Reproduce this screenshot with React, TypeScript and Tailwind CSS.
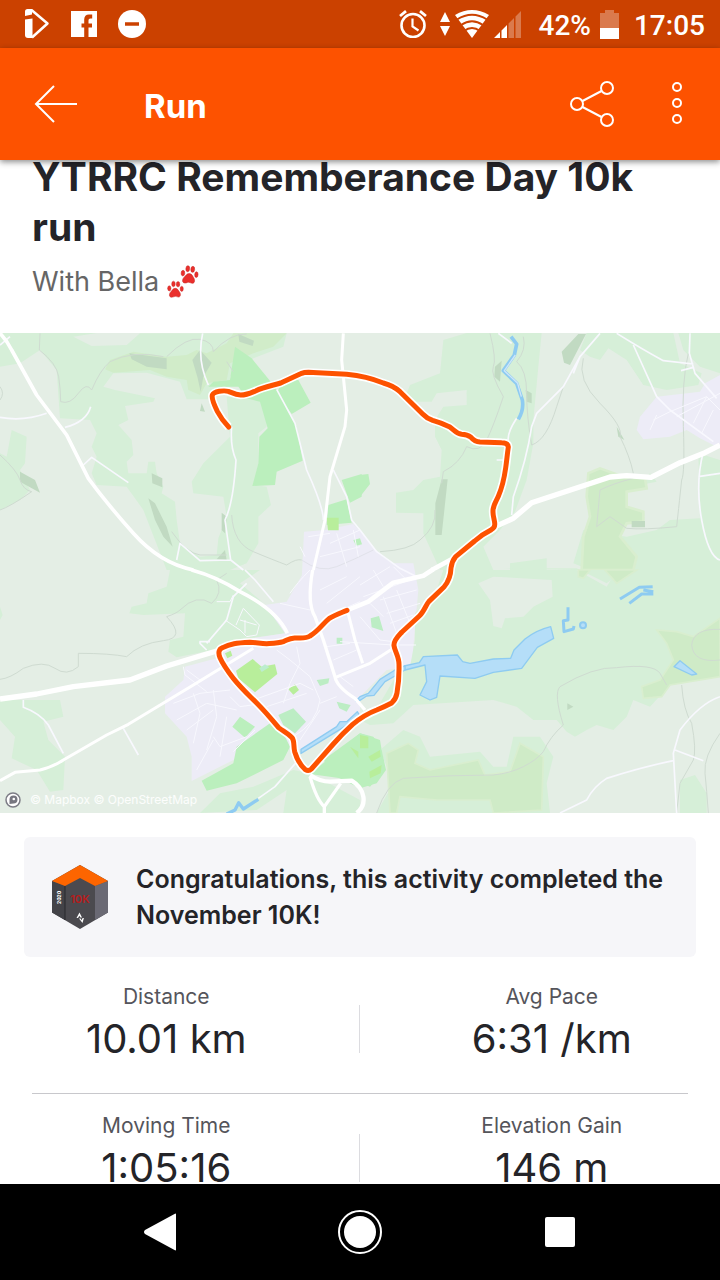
import type { ReactNode } from 'react';

interface Stat {
  label: string;
  value: string;
}

const statRows: Stat[][] = [
  [
    { label: 'Distance', value: '10.01 km' },
    { label: 'Avg Pace', value: '6:31 /km' },
  ],
  [
    { label: 'Moving Time', value: '1:05:16' },
    { label: 'Elevation Gain', value: '146 m' },
  ],
];

const route =
  'M686 282 C672 268 660 250 652 235 C642 215 634 198 637 186 C642 174 672 172 685 175 C698 180 706 185 722 186 C742 186 752 180 768 173 C790 162 815 158 842 150 L905 121 Q912 118 925 118 L1040 124 Q1100 130 1150 150 Q1180 158 1200 176 L1268 243 Q1280 256 1298 262 Q1320 268 1348 281 C1362 290 1368 302 1385 304 Q1402 305 1413 313 Q1424 326 1440 327 L1505 329 Q1524 329 1525 342 C1522 362 1520 385 1517 405 Q1510 455 1495 490 C1486 510 1478 520 1479 535 C1478 550 1486 566 1484 576 Q1484 584 1474 590 Q1446 604 1424 624 L1367 671 Q1356 684 1353 705 Q1352 738 1332 762 L1287 805 C1278 815 1272 836 1258 849 L1206 897 C1196 908 1180 922 1182 938 C1184 954 1198 972 1197 996 Q1198 1040 1191 1080 Q1188 1098 1175 1110 Q1152 1122 1130 1131 C1106 1140 1080 1156 1058 1174 C1038 1192 1020 1210 1000 1233 L934 1308 Q926 1316 916 1310 C900 1296 890 1276 884 1256 C880 1240 884 1224 876 1214 C864 1200 848 1194 836 1184 C806 1148 796 1136 770 1110 C740 1080 724 1066 700 1036 C680 1010 668 992 660 974 C654 960 656 948 668 944 C690 932 710 930 750 928 C770 928 780 932 800 932 C820 931 835 931 850 926 C864 920 868 916 884 915 C905 914 918 917 930 909 C958 892 968 872 988 856 C1004 846 1022 840 1041 832';

function StatusBar() {
  return (
    <div className="flex h-12 shrink-0 items-center justify-between bg-[#cb4100] pr-[15px] pl-6 text-white">
      <div className="flex items-center gap-[21px]">
        <svg viewBox="0 0 26 32" className="h-8 w-[26px]" fill="none">
          <path d="M1 3.500Q1 1 3.500 1H8v5.500L1 8z" fill="currentColor" />
          <path d="M1 11.500l7.500-1V30H4Q1 30 1 27z" fill="currentColor" />
          <path d="M7.500 2l16 13.500L8 29.500" stroke="currentColor" strokeWidth="2.500" strokeLinejoin="round" />
        </svg>
        <svg viewBox="0 0 26 26" className="size-[26px]">
          <path
            fill="currentColor"
            d="M0 0h26v26h-8.500V16.500h3.500v-4h-3.500V9.500c0-1.200.6-2 2-2h1.700v-4H18c-3 0-4.800 1.900-4.800 5v4h-2.700v4h2.700V26H0z"
          />
        </svg>
        <svg viewBox="0 0 28 28" className="size-7">
          <circle cx="14" cy="14" r="14" fill="currentColor" />
          <path d="M7 14h14" stroke="#cb4100" strokeWidth="3.500" />
        </svg>
      </div>
      <div className="flex items-center font-[Roboto,sans-serif] text-[28px] leading-8 font-medium">
        <svg viewBox="0 0 28 28" className="mr-3 size-7" fill="none" stroke="currentColor">
          <circle cx="14" cy="15.500" r="11.500" strokeWidth="2.600" />
          <path d="M13.500 8.500v8l6 4" strokeWidth="2.200" />
          <path d="M1 6l6-4.800M27 6l-6-4.800" strokeWidth="2.800" />
        </svg>
        <svg viewBox="0 0 12 24" className="mr-1 h-6 w-3" fill="currentColor">
          <path d="M1 10l5-10 5 10zM1 14h10L6 24z" />
        </svg>
        <svg viewBox="0 0 34 28" className="mr-[5px] h-7 w-[34px]">
          <path d="M0 5Q17-5 34 5L17 28z" fill="currentColor" />
          <path
            d="M2 9.500Q17 0 32 9.500M6 15Q17 7.500 28 15M9 21Q17 15 25 21"
            fill="none"
            stroke="#cb4100"
            strokeWidth="2"
          />
        </svg>
        <svg viewBox="0 0 28 28" className="mr-[17px] size-7" fill="currentColor">
          <path d="M0 28L6 22v6zM7.500 20.500L13 15v13H7.500z" />
          <path opacity=".3" d="M14.500 13.500L20 8v20h-5.500zM21.500 6.500L27 1v27h-5.500z" />
        </svg>
        <span className="pt-1">42%</span>
        <svg viewBox="0 0 19 29" className="mr-[15px] ml-[9px] h-[29px] w-[19px]" fill="currentColor">
          <path opacity=".3" d="M0 3h5V0h9v3h5v15H0z" />
          <path d="M0 18h19v11H0z" />
        </svg>
        <span className="pt-1">17:05</span>
      </div>
    </div>
  );
}

function AppBar() {
  return (
    <header className="z-10 flex h-28 shrink-0 items-center bg-[#fd5200] pr-[31px] pl-8 text-white shadow-[0_2px_6px_rgba(0,0,0,0.45)]">
      <button type="button" aria-label="Back" className="flex h-12 w-12 items-center justify-center">
        <svg viewBox="0 0 44 38" className="h-[38px] w-11" fill="none" stroke="currentColor" strokeWidth="2">
          <path d="M20 1L2 19l18 18M2 19h41" />
        </svg>
      </button>
      <h1 className="ml-16 flex-1 pt-1 text-[33px] leading-10 font-bold">Run</h1>
      <button type="button" aria-label="Share" className="flex h-12 w-12 items-center justify-center">
        <svg viewBox="0 0 44 46" className="h-[46px] w-11" fill="none" stroke="currentColor" strokeWidth="2">
          <circle cx="7" cy="23" r="6" />
          <circle cx="37" cy="7" r="6" />
          <circle cx="37" cy="39" r="6" />
          <path d="M12.500 20L31.500 10M12.500 26L31.500 36" />
        </svg>
      </button>
      <button type="button" aria-label="More options" className="ml-[49px] flex h-12 w-6 items-center justify-center">
        <svg viewBox="0 0 12 44" className="h-11 w-3" fill="none" stroke="currentColor" strokeWidth="2">
          <circle cx="6" cy="5" r="4" />
          <circle cx="6" cy="21" r="4" />
          <circle cx="6" cy="37" r="4" />
        </svg>
      </button>
    </header>
  );
}

function Paw({ transform }: { transform: string }) {
  return (
    <g transform={transform}>
      <ellipse cx="2.500" cy="8" rx="1.800" ry="2.800" />
      <ellipse cx="7" cy="3.200" rx="1.900" ry="3" />
      <ellipse cx="12" cy="3.500" rx="1.900" ry="3" />
      <ellipse cx="16" cy="8.500" rx="1.700" ry="2.800" />
      <path d="M9 8c2.500 0 3 1.800 4.300 3.500 1.600 1.800 2.200 5.800-.8 6-1.500 0-2-.8-3.500-.8s-2.500 1.200-4.200 1c-3-.4-2.500-4-.8-5.800C5.500 10.300 6.500 8 9 8z" />
    </g>
  );
}

function PawPrints() {
  return (
    <svg viewBox="0 0 34 34" className="size-[34px]" fill="#ea2f2c" stroke="#c4231f" strokeWidth=".5">
      <Paw transform="translate(14 0) rotate(4)" />
      <Paw transform="translate(0 16) scale(.92)" />
    </svg>
  );
}

/* The map is drawn in four quadrants, each with its own origin. */
const NW = 'translate(0 -9)';
const NE = 'translate(1080 -9)';
const SW = 'translate(0 711)';
const SE = 'translate(1080 711)';

function Land() {
  return (
    <g>
      <g transform={NW}>
        <g fill="#d6efd8">
          <path d="M0 9H290L220 20 275 48 380 45 420 10H860L850 50 760 85 690 140 690 170 640 208H560L540 155 440 128 340 130 310 170 345 180 465 205 460 215 375 228 385 270 355 285 395 330 400 375 380 395 385 430 440 430 445 395 465 395 470 430 490 470 485 490 525 515 530 570 540 640 600 680 650 675 655 625 680 560 670 500 580 490 575 455 610 400 690 320 680 200 800 200 800 290 775 310 775 400 760 465 800 470 813 525 775 560 775 640 740 700 690 720H500L430 540 380 470 290 465 275 430 290 380 275 350 290 310 270 270 180 265 170 120 120 60 60 100 0 110z" />
          <path d="M35 300L80 320 75 400 60 420 90 480 60 510 0 540V370L20 380z" />
        </g>
        <g fill="#d1ecc9">
          <path d="M330 90L400 65 500 80 560 75 590 60 620 70 680 40 700 10H860L820 50 760 70 690 100 680 150 620 160 600 195 565 180 560 150 500 140 450 120 340 128 315 118z" />
        </g>
        <g fill="#bbefbd">
          <path d="M705 50L755 85 800 140 840 190 865 240 890 290 908 392 830 425 825 465 757 468 775 400 778 320 803 295 780 215 740 205 715 170 625 170 640 155 690 150z" />
          <path d="M830 190L855 140 895 150 932 218 875 252z" />
          <path d="M1025 450L1085 432V500L1050 518zM985 525L1040 508 1055 578 980 585z" />
        </g>
        <g fill="#c1dac2">
          <path d="M388 70L500 85V118L440 110 395 88zM577 90L600 60 635 98 610 140 602 185 592 140zM715 12L762 32 758 48 718 35zM60 425L105 450 120 488 60 455zM455 430L487 445V472L457 460zM445 505L465 520 500 590 518 650 490 620 465 570zM665 548L680 560 675 610 665 600zM650 688L675 660 680 690zM605 220L615 245 600 243z" />
        </g>
      </g>
      <g transform={NE}>
        <g fill="#d6efd8">
          <path d="M320 9H545L535 110 520 270 520 340 500 450 465 545 420 600 370 650 400 720H240L190 610V550L108 548V488L160 480 190 450 240 440 245 360 225 320 225 270 250 230 320 225V180L230 190 215 215 130 215 150 165 240 130 250 30z" />
          <path d="M320 190L345 135 380 150V110L440 70 450 200 400 210 330 220z" />
          <path d="M680 9H940L960 100 1025 130 1015 165 920 180 850 165 800 90 745 55 720 90 690 80 660 60z" />
          <path d="M955 9H1080V130L1020 110 970 60z" />
          <path d="M1015 370L1080 390V720H690L640 700 670 600 800 620 890 600 930 570 1020 565z" />
          <path d="M450 700L560 685V720H450zM870 430L890 455 840 465z" />
        </g>
        <path
          fill="#cfebc7"
          stroke="#d9eecf"
          strokeWidth="8"
          d="M685 430L720 415 790 440 855 445 860 475 800 485 800 530 850 545 850 575 800 580 780 620 830 680 820 720H665L670 620 690 560 680 500z"
        />
        <g fill="#edecf7">
          <path d="M1080 135L1035 160 1020 185 890 200 840 260 830 300 850 328 930 320 980 300 1020 325 1060 345 1080 345z" />
        </g>
        <g fill="#c1dac2">
          <path d="M605 65L655 12H678L630 105 612 98zM405 110L425 92 420 155 403 140zM497 180L515 190V220L500 215zM245 448H263L245 615H226V520zM815 573H855V592H815zM770 290L793 330 775 320z" />
        </g>
      </g>
      <g transform={SW}>
        <g fill="#d6efd8">
          <path d="M510 0H780L720 40 780 90 860 190 700 210 640 240 530 262 505 245 510 210 550 200 555 130 430 135 388 130 395 110 440 100 445 70 500 50z" />
          <path d="M0 390H180L190 440 130 455 145 510 195 560 190 660 150 665 110 600 35 565 45 500 0 450z" />
          <path d="M600 729L660 670 760 650 880 600 930 610 1080 690V729H850L860 660 770 720z" />
          <path d="M0 110L8 135 0 150z" />
        </g>
        <g fill="#edecf7">
          <path d="M915 0L1080-20H1240L1255 60 1245 170 1235 290 1160 300 1080 380 1080 440 920 540 840 530 770 500 720 560 575 633 575 560 560 500 495 430V380L550 330 555 290 650 265 690 215 855 190 795 105 860 95z" />
        </g>
        <g fill="#bbefbd">
          <path d="M605 632L700 580 710 530 810 460 850 490 870 530 850 570 710 640 620 662zM697 470L720 440 765 470 735 503zM930 612L1080 490 1140 510 1155 600 1110 650 1060 630z" />
        </g>
        <path
          fill="#bcedc4"
          d="M835 435L880 415 918 455 885 490 850 465zM950 330L988 325 985 340 960 348zM1010 395L1052 405 1040 425 1018 415zM1010 203h17v18h-17zM1112 145L1137 138 1150 183 1115 172z"
        />
        <g fill="#b8ee9b">
          <path d="M708 302L758 267 785 290 825 283 832 312 765 367 715 325zM865 358L885 343 897 360 880 374zM675 250L692 242 697 257 682 265z" />
        </g>
        <path fill="#bcedcf" d="M778 295L795 283 808 292 785 306z" />
      </g>
      <g transform={NW}>
        <path fill="#edecf7" d="M912 605L975 600 1060 582 1100 625 1135 670 1190 710 1251 750H905z" />
        <path fill="#b8ee9b" d="M980 563h36v38h-32z" />
        <path fill="#bbefbd" d="M1060 630L1080 625 1086 643 1068 647zM1080 435L1105 432 1110 462 1080 500z" />
      </g>
      <g transform={SE}>
        <g fill="#d6efd8">
          <path d="M250 0H650L740 50 770 0H1080V320L930 345 870 410 820 390 800 440 760 480 710 465 680 480 645 500 620 485 590 450 520 450 470 410 400 390 160 405 100 460 30 465 0 450 60 400 118 300 150 290 165 210 165 130 230 60z" />
          <path d="M130 480L180 500 210 560 360 545 400 590 440 590 460 500 540 500 580 560 560 640 570 729H50L100 640 60 540z" />
          <path d="M960 630L1005 615 1040 670V729H960z" />
        </g>
        <path fill="#e4eee5" d="M355 40L400 20 575 30 578 80 520 110 490 140 435 145 425 175 400 168 390 90z" />
        <path fill="#d6efd8" d="M430-5H650L740 40 790 0H650z" />
        <g fill="#cfebc7" stroke="#d9eecf" strokeWidth="5">
          <path d="M80 550L145 520 175 540 165 580 210 600 355 570 375 615 450 605 480 520 550 560 545 720 400 729 390 690 230 690 120 680 110 729H90z" />
          <path d="M890 180L950 185 1000 200 1080 145V320L930 345 905 380 850 385 845 350 900 330 940 270 920 220z" />
          <path d="M655 0H690L670 25 655 20zM735 0H830L770 40z" />
        </g>
        <path fill="#bbefbd" d="M0 490L40 500 65 540 78 600 50 640 0 655-70 620-110 570z" />
        <path fill="#b8ee9b" d="M0 495L25 500V535H0zM25 560L60 540 62 560 35 575zM28 605L65 585 62 610 30 625zM-30 530L-5 545V565z" />
        <path fill="#c1dac2" d="M622 400L640 410 622 420z" />
      </g>
    </g>
  );
}

function Contours() {
  return (
    <g fill="none" stroke="#cfdbd1" strokeWidth="3">
      <g transform={NW}>
        <path d="M120 10L118 60Q170 100 176 140T182 215Q210 225 235 190T275 180Q300 120 330 95Q400 60 490 80M500 80Q560 20 600 28T640 65Q690 10 740 12M0 375Q50 420 60 450T95 485Q30 530 0 540M515 605Q560 670 600 675H680M695 555Q700 640 760 665T860 705Q890 685 905 690" />
        <path stroke="#e1e2ea" d="M905 690Q960 730 1010 710T1120 660" />
        <path d="M0 170Q15 190 0 210M680 95L700 125" />
      </g>
      <g transform={NE}>
        <path d="M390 10Q410 90 400 110T430 200Q400 290 380 330T320 350Q300 400 250 425L245 460M225 540Q230 590 180 630Q150 660 60 665M670 85Q650 150 720 220T780 320Q810 380 820 430M985 70Q965 150 970 290T965 450Q950 590 950 590Q850 600 800 595L750 560 710 590 720 480Q760 460 820 445M490 20Q500 60 470 95Q500 120 500 190T515 345Q560 330 590 230L610 170" />
      </g>
      <g transform={SW}>
        <path d="M0 328Q30 325 70 295Q130 270 165 295T235 290V250Q330 250 380 260Q420 220 490 212T500 140Q530 130 540 120Q590 70 635 100Q670 70 650 30L680 10" />
      </g>
      <g transform={SE}>
        <path d="M50 729Q80 640 130 625Q260 615 400 615Q450 610 490 590T550 545Q570 500 610 465Q580 370 600 350Q700 290 770 293Q880 280 900 310L920 345M965 345Q970 420 995 460Q1010 540 1000 570L960 640 950 729M1080 490Q1030 560 1035 610T1045 729M1080 270Q1000 280 995 225Q1000 175 1080 178" />
      </g>
    </g>
  );
}

function Water() {
  return (
    <g fill="#b5def8" stroke="#8ecbf1" strokeWidth="4" strokeLinejoin="round">
      <g transform={NE} fill="none">
        <path strokeWidth="11" d="M453 20L470 42 463 75 430 122 470 160 487 210Q492 240 475 268" />
        <path stroke="#cfe6fa" strokeWidth="4" d="M466 75L433 122 473 160 484 200" />
      </g>
      <g transform={SE}>
        <path d="M190 260L292 255 308 275 330 280 400 267 452 265 462 240 495 207Q530 180 572 170L581 205 532 232 485 295 400 307 345 325 240 318 230 382 210 390 180 375 200 335 195 285 135 300 132 288 178 278z" />
        <path d="M135 288L105 300 60 328 25 370 0 380-12 393 2 390 20 378 42 376 75 335 105 318 135 300z" />
        <path d="M942 290L960 272 1010 312 995 315z" />
        <path
          fill="none"
          strokeWidth="9"
          d="M780 87L838 52 878 50 M808 100L845 72 880 72M850 60L880 65M624 112V150L610 152 612 185 640 177 642 168"
        />
        <circle cx="669" cy="166" r="9" strokeWidth="6" />
      </g>
      <g transform={SW}>
        <path d="M903 538L1010 470 1020 455 1040 455 1072 425 1078 435 1050 460 903 550z" />
        <path fill="none" strokeWidth="10" d="M680 732L705 720 716 698 730 717 775 688" />
      </g>
    </g>
  );
}

function Streets() {
  return (
    <g fill="none" stroke="#f8f8fe" strokeWidth="3" strokeLinejoin="round">
      <g transform={NW}>
        <path
          strokeWidth="5"
          d="M0 262Q70 275 140 250M195 292Q260 275 272 230M250 405L275 382 385 458M608 10Q590 90 625 165M695 290Q690 350 708 390Q700 520 675 570L692 690 600 692 540 640 530 690M692 690L730 720M830 178L885 280 920 420Q970 530 970 570M1000 420L1040 500 1055 570 1080 600 1130 665 1200 715 1250 740M0 45L30 20"
        />
        <path d="M925 620L990 610M990 640L1080 600M960 680L1080 650M1010 610L1040 710M1060 600L1075 680M900 650L915 680" />
      </g>
      <g transform={NE}>
        <path
          strokeWidth="5"
          d="M720 10L660 80 610 170 530 250 515 290Q500 390 460 500L455 555M770 10Q850 60 910 92L1000 102M820 45L890 200 930 240 1060 335M990 10L988 70 1005 130 1070 205M1030 365Q1005 460 1025 570T1080 690M1015 440L1080 430M470 265Q440 310 445 335M410 390H432M415 10L455 40M963 122L1000 112M640 130L660 80"
        />
        <path d="M880 270L930 245 1040 200M950 260L1080 190M1000 280L1040 200 1080 240M1025 310L1060 240M870 300L890 255" />
      </g>
      <g transform={SW}>
        <path
          strokeWidth="5"
          d="M70 390V412Q120 430 145 465L190 550M370 475L415 555M735 0L765 30 820 95M740 40L700 80 680 150 620 220M620 240L600 220V215L630 215M895 570L825 650 775 685"
        />
        <path d="M675 150L720 180 740 200 770 195 778 165 730 115 708 165M650 95L690 95 700 75M720 150L770 165M735 150V190M640 500L660 530 740 500M765 480L700 545" />
        <path d="M870 70Q890 40 930 0M840 100L930 120M560 300L600 330M550 290L555 315 620 365M520 400L600 370 690 360M530 450L620 400 710 420M560 480L640 420M580 520L600 430 580 370M620 540L650 440 640 360M590 600L640 510M660 560L680 440M690 380L720 410 790 400M830 240L870 270 930 320 960 390Q950 460 880 500M760 390L900 340 940 360M800 410L920 370M850 400L870 340 900 280 890 230M960 400L1010 380M900 510L960 420M980 100L1080 20M1000 130L1080 95M960 60L1040 20M980 230L1050 220M1000 270L1070 240M1020 320L1060 350" />
      </g>
      <g transform={SE}>
        <path strokeWidth="5" d="M1080 380Q1020 400 960 480L940 550 950 729M940 572Q850 590 740 625Q700 650 680 690L600 729M945 540L1030 572" />
        <path d="M0 45L90-10M10 80L150 30M60 90L170 60M80 130L180 100M90 160L160 135M70 80L110 190M110 60L150 160M40 0L70 50M100-10L140 30M100 225H168M30 100L70 140M0 140L60 210 100 215M-60 215L100 225" />
      </g>
    </g>
  );
}

function Roads() {
  return (
    <g fill="none" stroke="#fff" strokeLinejoin="round">
      <g transform={NW}>
        <path strokeWidth="11" d="M0 10Q20 30 35 60L110 195 200 315 265 445Q320 520 400 610T580 720" />
        <path strokeWidth="9" d="M1030 10L1025 90 1040 240 1035 290 990 440 975 570 940 720" />
      </g>
      <g transform={NE}>
        <path strokeWidth="16" d="M405 590L460 565 515 518 750 441 800 437 873 442 960 398 1035 368 1080 345" />
        <path strokeWidth="14" d="M280 685L215 720" />
      </g>
      <g transform={SW}>
        <path strokeWidth="16" d="M0 387L110 372 220 350 390 330 500 288 660 240" />
        <path strokeWidth="11" d="M575 0Q650 20 720 65Q830 120 862 190" />
        <path strokeWidth="9" d="M0 632L45 607 120 600Q160 590 190 570L320 495 385 463 580 345 760 235" />
        <path strokeWidth="10" d="M938 0Q920 100 945 140L970 210 1005 320Q1010 350 1065 385L1095 420" />
        <path strokeWidth="14" d="M1040 121L1105 95 1180 38 1270 17 1300-2" />
        <path strokeWidth="9" d="M1042 121L1065 210 1088 280M1005 323L1110 280 1180 235" />
        <path strokeWidth="13" d="M930 615Q960 635 990 635L1055 632Q1085 650 1090 680T1070 729" />
        <path strokeWidth="10" d="M930 620Q950 690 973 710V729M1022 640L973 710" />
      </g>
    </g>
  );
}

function ActivityMap() {
  return (
    <div className="relative mt-[31px]">
      <svg viewBox="0 0 2160 1440" className="block w-full bg-[#e4eee5]" role="img" aria-label="Route map">
        <Land />
        <Contours />
        <Streets />
        <Water />
        <Roads />
        <g fill="none" strokeLinecap="round" strokeLinejoin="round">
          <path d={route} stroke="#fff" strokeWidth="25" strokeLinecap="butt" />
          <path d={route} stroke="#fd5200" strokeWidth="15" />
        </g>
      </svg>
      <div className="absolute bottom-1 left-1 flex items-center gap-2 text-xs leading-4 text-white/90">
        <svg viewBox="0 0 18 18" className="size-[18px]">
          <circle cx="9" cy="9" r="7" fill="#fff" stroke="#7d7d86" strokeWidth="1.500" />
          <path d="M5.500 13V8.500a4 4 0 1 1 4 4z" fill="#777780" />
          <circle cx="9.800" cy="8" r="1.300" fill="#fff" />
        </svg>
        <span>© Mapbox © OpenStreetMap</span>
      </div>
    </div>
  );
}

function ChallengeBadge() {
  return (
    <svg viewBox="0 0 56 64" className="h-16 w-14 shrink-0">
      <path d="M28 0l28 16v31.500L28 64 0 47.500V16z" fill="#4b4a4f" />
      <path d="M0 16l13 5v34L0 47.500z" fill="#434348" />
      <path d="M43 21l13-5v31.500L43 55z" fill="#6a6974" />
      <path d="M13 21v34" stroke="#29292d" />
      <path d="M28 0l28 16-13 5-15-8-15 8-13-5z" fill="#fd6500" />
      <text x="28" y="38" textAnchor="middle" fontSize="11" fontWeight="600" fill="#b71c1c">
        10K
      </text>
      <text transform="translate(9 39) rotate(-90)" fontSize="5" fontWeight="700" fill="#fff">
        2020
      </text>
      <path d="M24.500 53l3-5.500 2.500 5h-1.600l-1-1.800-1.400 2.300zM27 53.500h1.600l1 1.800 1-2.300h1.300L30.500 58z" fill="#fff" />
    </svg>
  );
}

function StatCell({ label, value }: Stat) {
  return (
    <div className="flex-1 text-center">
      <dt className="text-[21px] leading-6 text-[#55555b]">{label}</dt>
      <dd className="mt-[6px] text-[40px] leading-[48px] text-[#242428]">{value}</dd>
    </div>
  );
}

function NavButton({ label, children }: { label: string; children: ReactNode }) {
  return (
    <button type="button" aria-label={label} className="flex flex-1 items-center justify-center">
      <svg viewBox="0 0 44 44" className="size-11" fill="#fff">
        {children}
      </svg>
    </button>
  );
}

export default function App() {
  return (
    <div className="flex h-screen flex-col bg-white font-[Inter,sans-serif]">
      <StatusBar />
      <AppBar />
      <main className="min-h-0 flex-1 overflow-hidden">
        <div className="-mt-2 px-8">
          <h2 className="text-[39px] leading-[50px] font-bold text-[#242428]">YTRRC Rememberance Day 10k run</h2>
          <p className="mt-[10px] flex items-center gap-2 text-[27px] leading-10 text-[#666]">
            With Bella
            <PawPrints />
          </p>
        </div>
        <ActivityMap />
        <section className="mx-6 mt-6 flex items-center gap-7 rounded-md bg-[#f6f6f9] px-7 py-6">
          <ChallengeBadge />
          <p className="text-[25px] leading-9 font-semibold text-[#242428]">
            Congratulations, this activity completed the November 10K!
          </p>
        </section>
        <div className="mt-2 pr-0.5">
          {statRows.map((row) => (
            <div key={row[0].label}>
              <dl className="flex gap-[26px] pt-5 pb-[30px]">
                <StatCell {...row[0]} />
                <div className="mt-5 h-12 w-px bg-[#dcdce0]" />
                <StatCell {...row[1]} />
              </dl>
              <div className="mr-[30px] ml-8 h-px bg-[#c8c8cc]" />
            </div>
          ))}
        </div>
      </main>
      <nav className="flex h-24 shrink-0 bg-black px-[60px]">
        <NavButton label="Back">
          <path d="M38 4.500v35q0 1.500-1.500 .5L7 24q-2-2 0-4L36.500 4q1.500-1 1.500 .5z" />
        </NavButton>
        <NavButton label="Home">
          <circle cx="22" cy="22" r="16" />
          <circle cx="22" cy="22" r="21" fill="none" stroke="#fff" strokeWidth="2" />
        </NavButton>
        <NavButton label="Recent apps">
          <rect x="7" y="7" width="30" height="30" rx="2" />
        </NavButton>
      </nav>
    </div>
  );
}
